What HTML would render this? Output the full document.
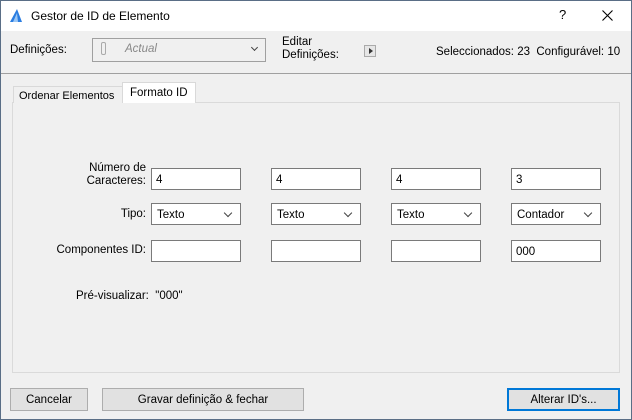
<!DOCTYPE html><html><head><style>
*{box-sizing:border-box;margin:0;padding:0}
body{width:632px;height:420px;overflow:hidden;font-family:"Liberation Sans",sans-serif;font-size:11.5px;color:#000;background:#f0f0f0;position:relative}
.a{position:absolute;white-space:nowrap}
.win{position:absolute;left:0;top:0;width:632px;height:420px;border:1px solid #5a6e86}
.inp{position:absolute;background:#fff;border:1px solid #7a7a7a;height:22px;padding:5px 0 0 4px}
.sel{position:absolute;background:#fff;border:1px solid #7a7a7a;height:22px;padding:5px 0 0 5px}
.sel:after{content:"";position:absolute;right:9px;top:6px;width:5px;height:5px;border-right:1px solid #444;border-bottom:1px solid #444;transform:rotate(45deg)}
.btn{position:absolute;background:#e1e1e1;border:1px solid #adadad;height:23px;text-align:center;padding-top:5px}
.r{text-align:right}
</style></head><body>
<div class="a" style="left:0;top:0;width:632px;height:31px;background:#fff"></div>
<svg class="a" style="left:9px;top:8px" width="14" height="15"><polygon points="1,14 8,1 13,14" fill="#2a7de1"/><polygon points="4,14 8,5 9,14" fill="#9cc7f5"/></svg>
<div class="a" style="left:31px;top:9px;font-size:12px">Gestor de ID de Elemento</div>
<div class="a" style="left:559px;top:7px;font-size:13px">?</div>
<svg class="a" style="left:602px;top:10px" width="11" height="11"><path d="M0.5 0.5L10.5 10.5M10.5 0.5L0.5 10.5" stroke="#000" stroke-width="1.1"/></svg>
<div class="a" style="left:10px;top:44px">Definições:</div>
<div class="a" style="left:92px;top:38px;width:174px;height:24px;border:1px solid #a0a0a0;background:#f0f0f0"></div>
<div class="a" style="left:101px;top:42px;width:5px;height:13px;border:1px solid #aaa;border-radius:2px"></div>
<div class="a" style="left:125px;top:43px;color:#888;font-style:italic">Actual</div>
<div class="a" style="left:252px;top:45px;width:5px;height:5px;border-right:1px solid #444;border-bottom:1px solid #444;transform:rotate(45deg)"></div>
<div class="a" style="left:282px;top:36px;line-height:13px">Editar<br>Definições:</div>
<div class="a" style="left:364px;top:45px;width:12px;height:12px;border:1px solid #aaa;background:#e6e6e6"></div>
<div class="a" style="left:369px;top:48px;border-left:4px solid #333;border-top:3px solid transparent;border-bottom:3px solid transparent"></div>
<div class="a" style="left:436px;top:46px">Seleccionados: 23&nbsp;&nbsp;Configurável: 10</div>
<div class="a" style="left:1px;top:73px;width:630px;height:1px;background:#a0a0a0"></div>
<div class="a" style="left:12px;top:102px;width:608px;height:271px;border:1px solid #dadada;background:#f0f0f0"></div>
<div class="a" style="left:13px;top:86px;width:110px;height:17px;border:1px solid #d9d9d9;border-bottom:none;background:#f0f0f0;padding:3px 0 0 5px;font-size:11px">Ordenar Elementos</div>
<div class="a" style="left:122px;top:82px;width:74px;height:21px;border:1px solid #d9d9d9;border-bottom:none;background:#fff;padding:4px 0 0 7px">Formato ID</div>
<div class="a r" style="left:40px;top:162px;width:106px;line-height:13px">Número de<br>Caracteres:</div>
<div class="a r" style="left:40px;top:208px;width:106px">Tipo:</div>
<div class="a r" style="left:40px;top:244px;width:106px">Componentes ID:</div>
<div class="inp" style="left:151px;top:168px;width:90px">4</div>
<div class="inp" style="left:271px;top:168px;width:90px">4</div>
<div class="inp" style="left:391px;top:168px;width:90px">4</div>
<div class="inp" style="left:511px;top:168px;width:90px">3</div>
<div class="sel" style="left:151px;top:203px;width:90px">Texto</div>
<div class="sel" style="left:271px;top:203px;width:90px">Texto</div>
<div class="sel" style="left:391px;top:203px;width:90px">Texto</div>
<div class="sel" style="left:511px;top:203px;width:90px">Contador</div>
<div class="inp" style="left:151px;top:240px;width:90px"></div>
<div class="inp" style="left:271px;top:240px;width:90px"></div>
<div class="inp" style="left:391px;top:240px;width:90px"></div>
<div class="inp" style="left:511px;top:240px;width:90px">000</div>
<div class="a" style="left:76px;top:290px">Pré-visualizar:&nbsp; "000"</div>
<div class="btn" style="left:10px;top:388px;width:78px">Cancelar</div>
<div class="btn" style="left:102px;top:388px;width:202px">Gravar definição &amp; fechar</div>
<div class="btn" style="left:507px;top:388px;width:113px;border:2px solid #0078d7;padding-top:4px">Alterar ID's...</div>
<div class="win"></div>
</body></html>
